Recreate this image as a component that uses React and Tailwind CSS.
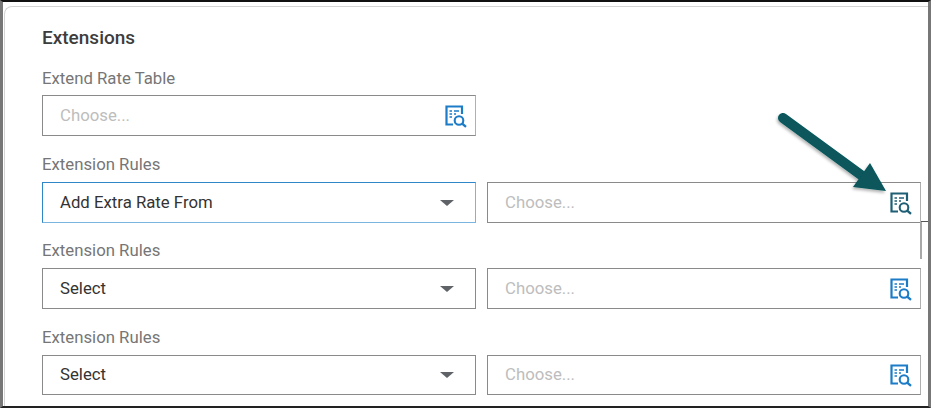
import React from "react";

const font = { fontFamily: "Roboto, 'Liberation Sans', sans-serif" };

function LookupIcon({ color = "#1c7cc7" }) {
  return (
    <svg width="24" height="24" viewBox="0 0 24 24" fill="none" stroke={color} className="shrink-0">
      <path d="M9 20.5H2.5V2.5H18V10" strokeWidth="2.2" />
      <path d="M5.5 7H8M10 7H15M5.5 10H8M10 10H12M5.5 13H8" strokeWidth="1.5" />
      <circle cx="15" cy="16.5" r="4.3" strokeWidth="2.1" />
      <path d="M18.2 19.6L22 22.8" strokeWidth="2.4" />
    </svg>
  );
}

function Caret() {
  return <span className="w-0 h-0 border-l-[7px] border-r-[7px] border-t-[6px] border-l-transparent border-r-transparent border-t-[#5f6368]" />;
}

function Lookup({ iconColor }) {
  return (
    <div className="flex-1 min-w-0 bg-white border border-[#8a8a8a] border-r-[#b0b0b0] flex items-center justify-between pl-[17px] pr-[7px]">
      <span className="text-[16.75px] text-[#bdbdbd]">Choose...</span>
      <LookupIcon color={iconColor} />
    </div>
  );
}

function SelectBox({ value, focus }) {
  return (
    <div className={"w-[434px] shrink-0 bg-white border flex items-center justify-between pl-[17px] pr-[21px] " + (focus ? "border-[#2f86c8] border-r-[#7ab4e0] border-b-[#7ab4e0]" : "border-[#8a8a8a]")}>
      <span className="text-[16.75px] text-[#333333]">{value}</span>
      <Caret />
    </div>
  );
}

function Rule({ value, focus, iconColor, last }) {
  return (
    <div className={"flex flex-col " + (last ? "mt-px" : "")}>
      <div className="text-[16.75px] leading-[20px] text-[#767676] mb-[8px]">Extension Rules</div>
      <div className={"flex gap-[11px] " + (last ? "h-[40px]" : "h-[41px]")}>
        <SelectBox value={value} focus={focus} />
        <Lookup iconColor={iconColor} />
      </div>
    </div>
  );
}

export default function App() {
  return (
    <div style={font} className="relative w-[931px] h-[408px] overflow-hidden bg-white border-t-2 border-t-[#111111] border-b-2 border-b-[#222222] border-l-[3px] border-l-[#777777] border-r-[3px] border-r-[#777777]">
      <div className="h-full ml-[1px] mt-[4px] border-t border-l border-[#d4d4d4] rounded-tl-[8px] pl-[37px] pr-[7px] pt-[20px]">
        <div className="text-[19px] leading-[22px] font-medium text-[#3d3d3d] mb-[19px]">Extensions</div>
        <div className="text-[16.75px] leading-[20px] text-[#767676] mb-[7px]">Extend Rate Table</div>
        <div className="w-[434px] h-[41px] flex mb-[18px]">
          <Lookup />
        </div>
        <div className="flex flex-col gap-[17px]">
          <Rule value="Add Extra Rate From" focus iconColor="#1f5f75" />
          <Rule value="Select" />
          <Rule value="Select" last />
        </div>
      </div>
      <div className="absolute left-[918px] top-[219px] w-[10px] h-px bg-[#555555]" />
      <div className="absolute left-[917px] top-[220px] w-[2px] h-[37px] bg-[#a8a8a8]" />
      <svg className="absolute left-[768px] top-[105px]" width="125" height="90" viewBox="0 0 125 90" fill="none">
        <defs>
          <filter id="s" x="-20%" y="-20%" width="140%" height="140%">
            <feDropShadow dx="-1" dy="2" stdDeviation="1.5" floodColor="#000" floodOpacity="0.3" />
          </filter>
        </defs>
        <g filter="url(#s)">
          <path d="M12 11L90 68" stroke="#07575b" strokeWidth="10" strokeLinecap="round" />
          <path d="M82 80L99 56L115 84Z" fill="#07575b" />
        </g>
      </svg>
    </div>
  );
}
